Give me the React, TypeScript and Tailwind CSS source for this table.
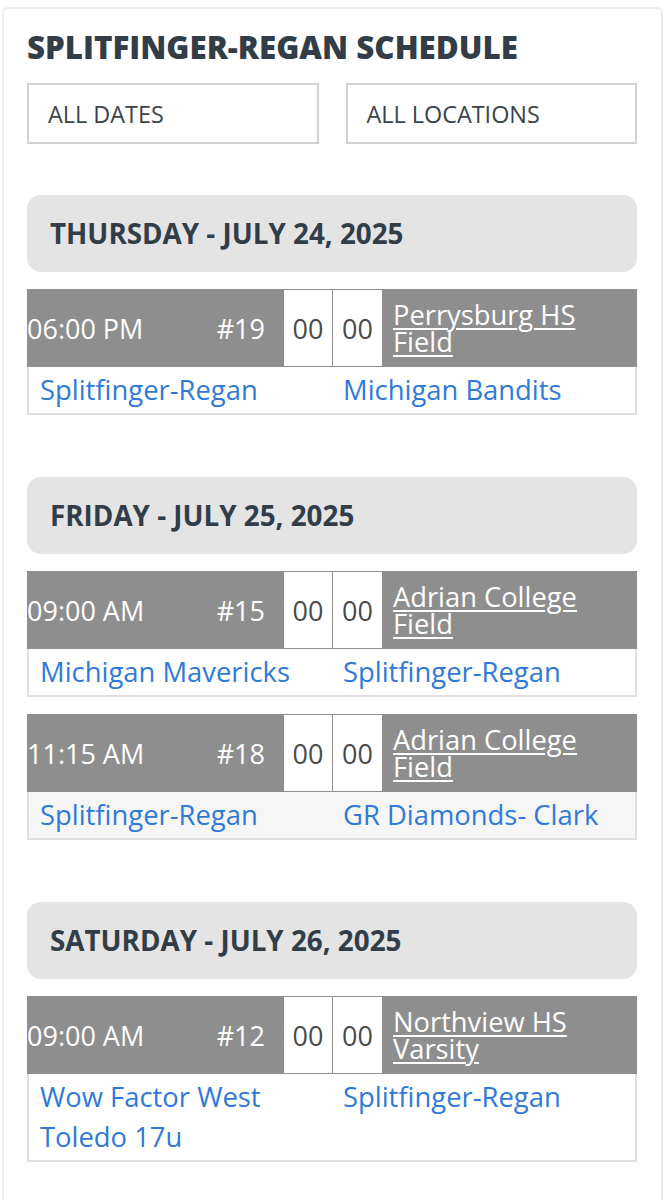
import React from "react";

type Game = {
  time: string;
  num: string;
  location: string;
  home: string;
  away: string;
  striped?: boolean;
};

type Day = { title: string; games: Game[] };

const days: Day[] = [
  {
    title: "THURSDAY - JULY 24, 2025",
    games: [
      {
        time: "06:00 PM",
        num: "#19",
        location: "Perrysburg HS Field",
        home: "Splitfinger-Regan",
        away: "Michigan Bandits",
      },
    ],
  },
  {
    title: "FRIDAY - JULY 25, 2025",
    games: [
      {
        time: "09:00 AM",
        num: "#15",
        location: "Adrian College Field",
        home: "Michigan Mavericks",
        away: "Splitfinger-Regan",
      },
      {
        time: "11:15 AM",
        num: "#18",
        location: "Adrian College Field",
        home: "Splitfinger-Regan",
        away: "GR Diamonds- Clark",
        striped: true,
      },
    ],
  },
  {
    title: "SATURDAY - JULY 26, 2025",
    games: [
      {
        time: "09:00 AM",
        num: "#12",
        location: "Northview HS Varsity",
        home: "Wow Factor West Toledo 17u",
        away: "Splitfinger-Regan",
      },
    ],
  },
];

function GameCard({ g }: { g: Game }) {
  return (
    <div className="flex flex-col">
      <div className="flex h-[78px] items-stretch bg-[#8e8e8e] text-white">
        <div className="flex w-[166px] shrink-0 items-center text-[27px] leading-none">
          {g.time}
        </div>
        <div className="flex w-[91px] shrink-0 items-center justify-end pr-[19px] text-[27px] leading-none">
          {g.num}
        </div>
        <div className="my-[1px] flex w-[48px] shrink-0 items-center justify-center bg-white text-[27px] leading-none text-[#4a4a4a]">
          00
        </div>
        <div className="my-[1px] ml-[1px] flex w-[49px] shrink-0 items-center justify-center bg-white text-[27px] leading-none text-[#4a4a4a]">
          00
        </div>
        <div className="flex min-w-0 flex-1 items-center pl-[11px] pr-[8px]">
          <a className="text-[27.3px] leading-[27px] text-white underline decoration-[1.5px] underline-offset-[3px]">
            {g.location}
          </a>
        </div>
      </div>
      <div
        className={
          "grid grid-cols-2 border-x-2 border-b-2 border-[#e0e0e0] pb-[3px] pt-[3px] text-[27.4px] leading-[40px] text-[#2f7ad8] " +
          (g.striped ? "bg-[#f6f6f6]" : "bg-white")
        }
      >
        <div className="pl-[11px] pr-[8px]">{g.home}</div>
        <div className="pl-[11px] pr-[8px]">{g.away}</div>
      </div>
    </div>
  );
}

export default function App() {
  return (
    <div
      className="min-h-[1200px] w-[666px] overflow-hidden bg-white"
      style={{ fontFamily: '"Open Sans", "Liberation Sans", sans-serif' }}
    >
      <div className="ml-[2px] mr-[3px] mt-[7px] rounded-[6px] border-2 border-[#ececec] pb-[80px] pl-[23px] pr-[24px] pt-[20px]">
        <h1 className="text-[31.3px] font-extrabold leading-[37px] text-[#323d48]">
          SPLITFINGER-REGAN SCHEDULE
        </h1>
        <div className="mt-[17px] grid grid-cols-2 gap-[27px]">
          <div className="flex h-[61px] items-center border-2 border-[#d2d2d2] pl-[19px] pt-[3px] text-[23.4px] text-[#3a434c]">
            ALL DATES
          </div>
          <div className="flex h-[61px] items-center border-2 border-[#d2d2d2] pl-[19px] pt-[3px] text-[23.4px] text-[#3a434c]">
            ALL LOCATIONS
          </div>
        </div>
        {days.map((d, i) => (
          <div key={d.title} className={i === 0 ? "mt-[51px]" : "mt-[62px]"}>
            <div className="flex h-[77px] items-center rounded-[14px] bg-[#e4e4e4] pl-[23px] pt-[1px] text-[27.8px] font-bold text-[#323d48]">
              {d.title}
            </div>
            <div className="mt-[17px] flex flex-col gap-[17px]">
              {d.games.map((g, j) => (
                <GameCard key={j} g={g} />
              ))}
            </div>
          </div>
        ))}
      </div>
    </div>
  );
}
